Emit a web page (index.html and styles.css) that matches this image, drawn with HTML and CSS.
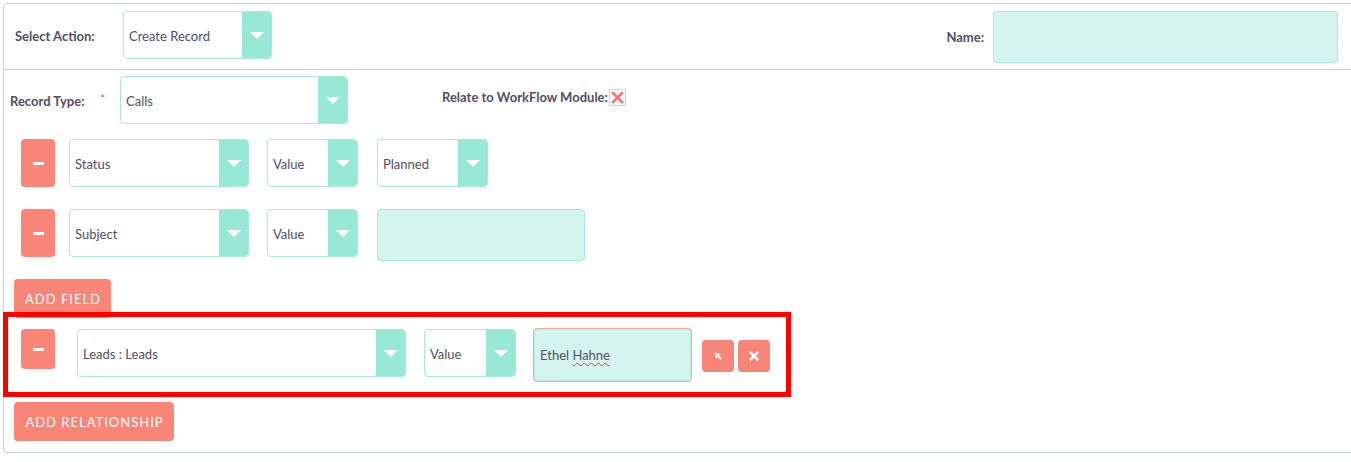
FILE: index.html
```html
<!DOCTYPE html>
<html lang="en">
<head>
<meta charset="utf-8">
<title>Create Record</title>
<link rel="stylesheet" href="styles.css">
</head>
<body>
<div class="panel">
  <div class="action-row">
    <div class="lbl lbl-action">Select Action:</div>
    <div class="sel sel-action"><span class="sel-text">Create Record</span><span class="arr"></span></div>
    <div class="spacer"></div>
    <div class="lbl lbl-name">Name:</div>
    <div class="inp inp-name"></div>
  </div>
  <div class="content">
    <div class="type-row">
      <div class="lbl lbl-type">Record Type:</div>
      <span class="req">*</span>
      <div class="sel sel-calls"><span class="sel-text">Calls</span><span class="arr"></span></div>
      <div class="lbl lbl-relate">Relate to WorkFlow Module:</div>
      <svg class="broken" width="17" height="17" viewBox="0 0 17 17">
        <rect x="0.5" y="0.5" width="16" height="16" fill="#fff" stroke="#cdd1da"/>
        <path d="M4 4 L13 13 M13 4 L4 13" stroke="#ff7070" stroke-width="2.6" stroke-linecap="square"/>
      </svg>
    </div>

    <div class="field-row">
      <div class="minus"><span></span></div>
      <div class="sel sel-field"><span class="sel-text">Status</span><span class="arr"></span></div>
      <div class="sel sel-value"><span class="sel-text">Value</span><span class="arr"></span></div>
      <div class="sel sel-planned"><span class="sel-text">Planned</span><span class="arr"></span></div>
    </div>

    <div class="field-row row-subject">
      <div class="minus"><span></span></div>
      <div class="sel sel-field"><span class="sel-text">Subject</span><span class="arr"></span></div>
      <div class="sel sel-value"><span class="sel-text">Value</span><span class="arr"></span></div>
      <div class="inp inp-subject"></div>
    </div>

    <button class="btn btn-field">ADD FIELD</button>

    <div class="rel-row">
      <div class="minus minus-small"><span></span></div>
      <div class="sel sel-leads"><span class="sel-text">Leads : Leads</span><span class="arr"></span></div>
      <div class="sel sel-value2"><span class="sel-text">Value</span><span class="arr"></span></div>
      <div class="inp inp-ethel">Ethel <span class="spell">Hahne</span></div>
      <div class="ibtn ibtn-select">
        <svg width="12" height="12" viewBox="0 0 12 12"><path d="M2.5 2.5 L9 4.2 L6.8 5.4 L9.8 8.4 L8.4 9.8 L5.4 6.8 L4.2 9 Z" fill="#fff"/></svg>
      </div>
      <div class="ibtn ibtn-clear">
        <svg width="12" height="12" viewBox="0 0 12 12"><path d="M2.8 2.8 L9.2 9.2 M9.2 2.8 L2.8 9.2" stroke="#fff" stroke-width="2.6" stroke-linecap="square"/></svg>
      </div>
    </div>

    <button class="btn btn-rel">ADD RELATIONSHIP</button>
  </div>
  <div class="highlight"></div>
</div>
</body>
</html>
```

FILE: styles.css
```css
html, body {
  margin: 0;
  padding: 0;
  background: #fff;
  overflow: hidden;
}

body {
  font-family: Lato, "Liberation Sans", sans-serif;
  font-size: 13px;
  color: #534d64;
}

.panel {
  position: relative;
  margin: 3px 0 0 3px;
  width: 1360px;
  height: 450px;
  box-sizing: border-box;
  border: 1px solid #c9cfd5;
  border-radius: 4px;
}

.action-row {
  display: flex;
  align-items: flex-start;
  padding: 7px 24px 0 11px;
  box-sizing: border-box;
  height: 66px;
  border-bottom: 1px solid #c9cfd5;
}

.lbl {
  font-weight: bold;
  white-space: nowrap;
}

.lbl-action {
  width: 108px;
  line-height: 51px;
}

.spacer {
  flex: 1;
}

.lbl-name {
  line-height: 53px;
  margin-right: 9px;
}

.sel {
  display: flex;
  align-items: stretch;
  height: 48px;
  box-sizing: border-box;
  border: 1px solid #a6eadb;
  border-radius: 4px;
  background: #fff;
  overflow: hidden;
}

.sel-text {
  flex: 1;
  display: flex;
  align-items: center;
  padding: 2px 0 0 5px;
  white-space: nowrap;
}

.arr {
  width: 29px;
  background: #97e8d6;
  display: flex;
  align-items: center;
  justify-content: center;
}

.arr::after {
  content: "";
  width: 0;
  height: 0;
  border-left: 7px solid transparent;
  border-right: 7px solid transparent;
  border-top: 7px solid #fff;
}

.inp {
  box-sizing: border-box;
  border: 1px solid #a6eadb;
  border-radius: 4px;
  background: #d3f5ed;
}

.sel-action {
  width: 149px;
}

.inp-name {
  width: 345px;
  height: 52px;
}

.content {
  padding: 6px 0 0 6px;
}

.type-row {
  display: flex;
  align-items: flex-start;
  height: 48px;
}

.lbl-type {
  width: 90px;
  line-height: 50px;
}

.req {
  color: #f2584c;
  line-height: 46px;
  width: 6px;
  font-size: 12px;
}

.sel-calls {
  width: 228px;
  margin-left: 14px;
}

.lbl-relate {
  margin-left: 94px;
  margin-top: 13px;
  line-height: 16px;
}

.broken {
  margin-top: 13px;
  margin-left: 1px;
  display: block;
}

.field-row {
  display: flex;
  align-items: flex-start;
  margin: 15px 0 0 11px;
}

.row-subject {
  margin-top: 22px;
}

.minus {
  width: 34px;
  height: 48px;
  border-radius: 4px;
  background: #f98578;
  display: flex;
  align-items: center;
  justify-content: center;
}

.minus span {
  width: 11px;
  height: 3px;
  background: #fff;
}

.minus-small {
  height: 40px;
  margin-top: 1px;
}

.sel-field {
  width: 180px;
  margin-left: 14px;
}

.sel-value {
  width: 91px;
  margin-left: 18px;
}

.sel-planned {
  width: 111px;
  margin-left: 19px;
}

.inp-subject {
  width: 208px;
  height: 52px;
  margin-left: 19px;
}

.btn {
  display: block;
  border: none;
  border-radius: 4px;
  background: #f98578;
  color: #fff;
  font-family: Lato, "Liberation Sans", sans-serif;
  font-size: 13px;
  letter-spacing: 1px;
  white-space: nowrap;
  text-align: center;
  height: 39px;
  padding: 1px 0 0 1px;
  margin-left: 4px;
  cursor: pointer;
}

.btn-field {
  margin-top: 18px;
  width: 97px;
}

.btn-rel {
  margin-top: 20px;
  width: 160px;
}

.rel-row {
  display: flex;
  align-items: flex-start;
  margin: 10px 0 0 11px;
}

.sel-leads {
  width: 329px;
  margin-left: 22px;
  margin-top: 1px;
}

.sel-value2 {
  width: 92px;
  margin-left: 18px;
  margin-top: 1px;
}

.inp-ethel {
  width: 159px;
  height: 54px;
  margin-left: 17px;
  border-color: #efa996;
  box-shadow: inset 0 0 0 1px #bfeee0;
  display: flex;
  align-items: center;
  padding-left: 6px;
  white-space: pre;
}

.spell {
  text-decoration: underline wavy #e53935;
  text-decoration-thickness: 1px;
  text-underline-offset: 2px;
}

.ibtn {
  width: 32px;
  height: 32px;
  border-radius: 4px;
  background: #f98578;
  margin-top: 12px;
  display: flex;
  align-items: center;
  justify-content: center;
}

.ibtn-select {
  margin-left: 10px;
}

.ibtn-clear {
  margin-left: 4px;
}

.highlight {
  position: absolute;
  left: -1px;
  top: 308px;
  width: 788px;
  height: 85px;
  box-sizing: border-box;
  border: 5px solid #ff0000;
  pointer-events: none;
}
```
